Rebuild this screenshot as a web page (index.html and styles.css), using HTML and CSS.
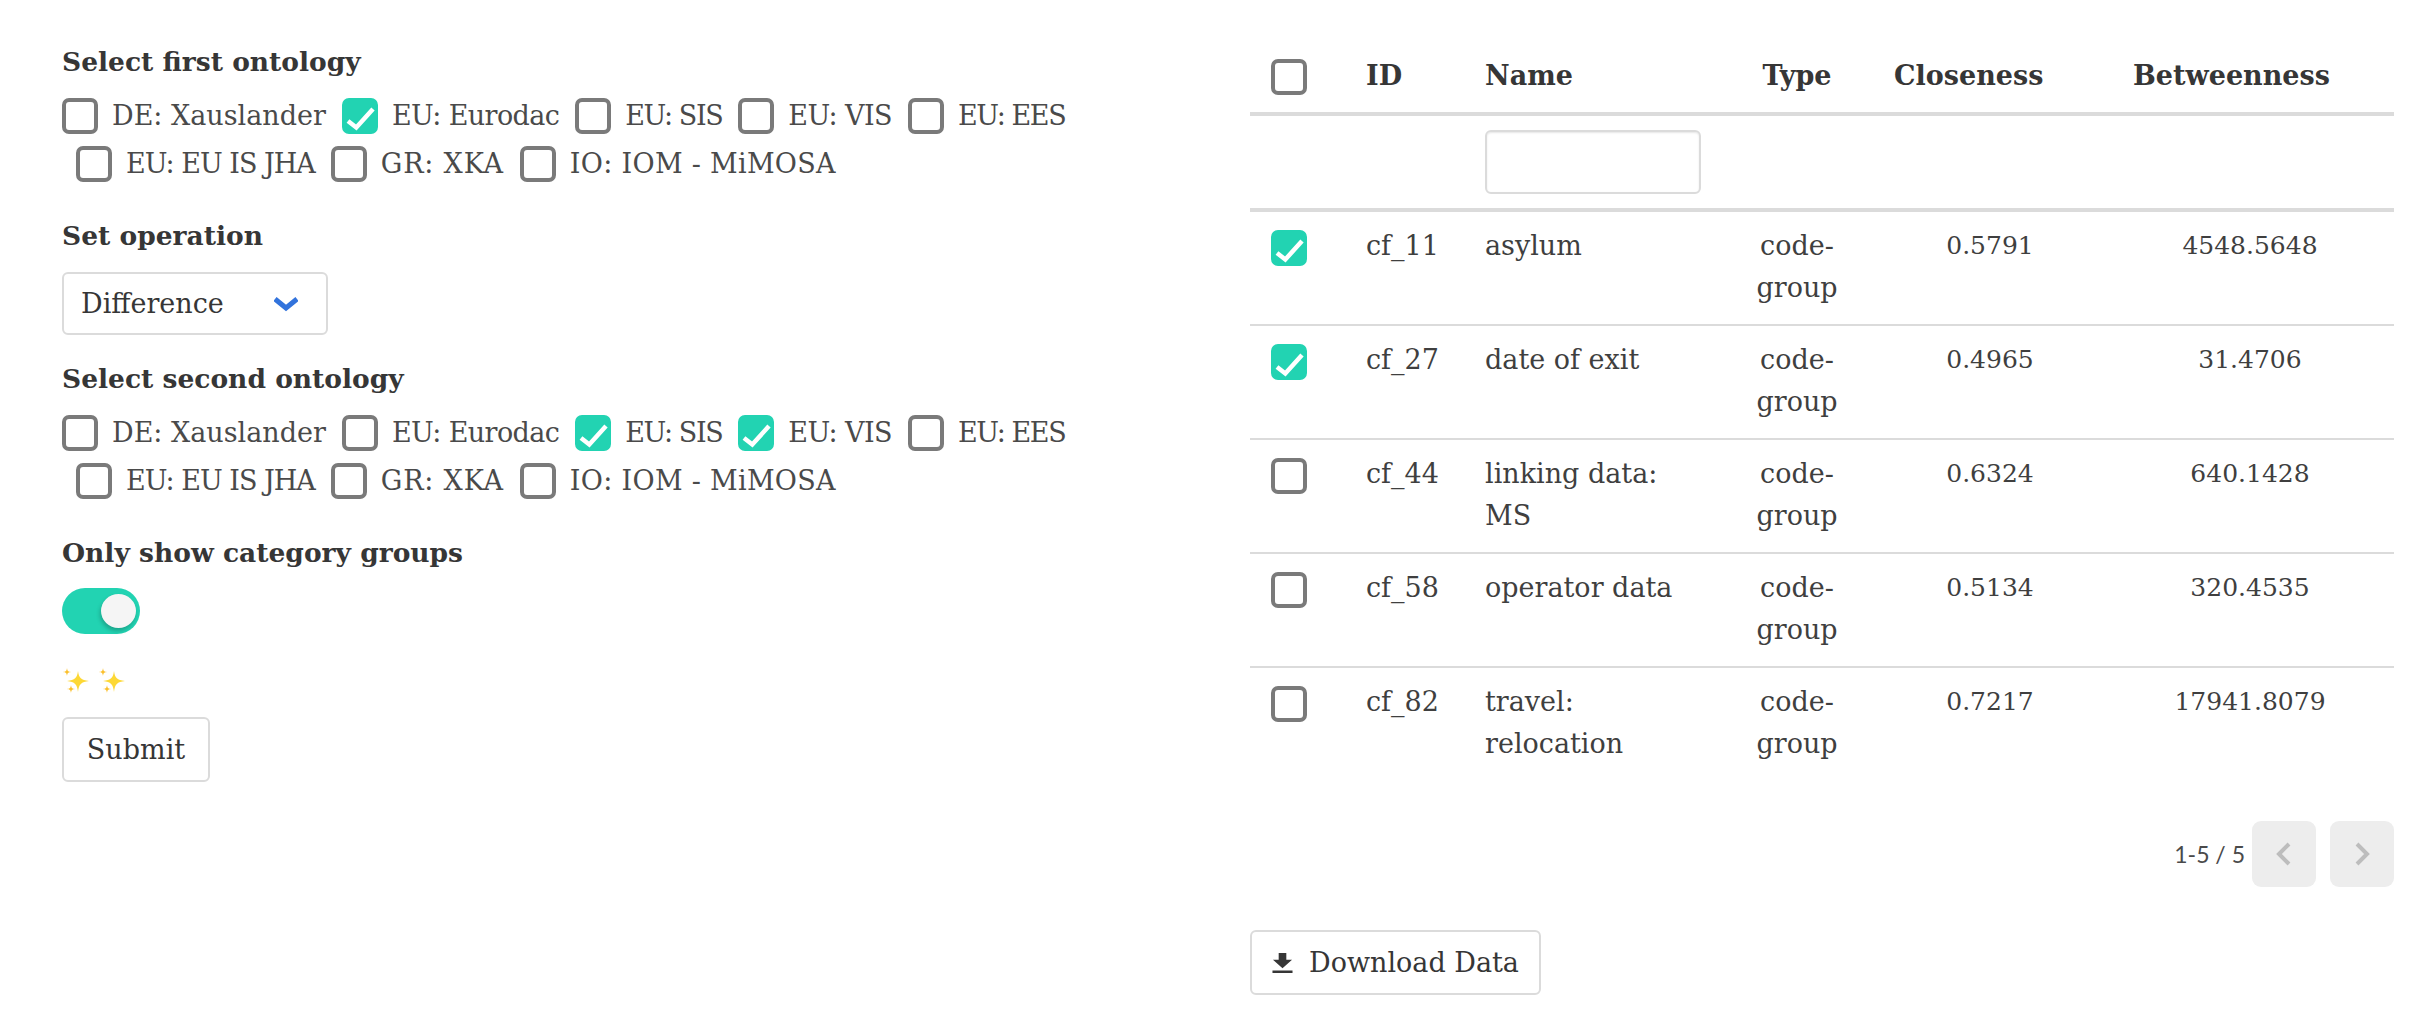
FILE: index.html
```html
<!DOCTYPE html>
<html lang="en">
<head>
<meta charset="utf-8">
<title>Ontology comparison</title>
<link rel="stylesheet" href="styles.css">
</head>
<body>
<svg class="defs" width="0" height="0" aria-hidden="true">
  <symbol id="tick" viewBox="0 0 36 36"><path d="M6 23 L14.300 29.500 L31 11" fill="none" stroke="#fff" stroke-width="4.500"/></symbol>
  <symbol id="sparkle" viewBox="0 0 28 28">
    <path d="M16 4 C17 11 19 13 27 14 C19 15 17 17 16 25 C15 17 13 15 5 14 C13 13 15 11 16 4Z" fill="#fdd835"/>
    <path d="M5 1 C5.400 4 6 4.600 9 5 C6 5.400 5.400 6 5 9 C4.600 6 4 5.400 1 5 C4 4.600 4.600 4 5 1Z" fill="#fbc02d"/>
    <path d="M9 18 C9.400 21 10 21.600 13 22 C10 22.400 9.400 23 9 26 C8.600 23 8 22.400 5 22 C8 21.600 8.600 21 9 18Z" fill="#fbc02d"/>
  </symbol>
</svg>
<main class="page">
  <section class="controls">
    <div class="field">
      <div class="label">Select first ontology</div>
      <div class="check-row">
        <label class="item"><span class="box"></span>DE: Xauslander</label>
        <label class="item tight-sm"><span class="box on"><svg class="tick"><use href="#tick"/></svg></span>EU: Eurodac</label>
        <label class="item tight-lg"><span class="box"></span>EU: SIS</label>
        <label class="item tight-sm"><span class="box"></span>EU: VIS</label>
        <label class="item tight-lg"><span class="box"></span>EU: EES</label>
      </div>
      <div class="check-row indented">
        <label class="item tight-md"><span class="box"></span>EU: EU IS JHA</label>
        <label class="item loose-md"><span class="box"></span>GR: XKA</label>
        <label class="item loose-sm"><span class="box"></span>IO: IOM - MiMOSA</label>
      </div>
    </div>
    <div class="field field-select">
      <div class="label label-tight">Set operation</div>
      <div class="select">
        <span>Difference</span>
        <svg class="select-arrow" viewBox="0 0 24 16"><path d="M1 3 L12 12 L23 3" fill="none" stroke="#3273dc" stroke-width="5"/></svg>
      </div>
    </div>
    <div class="field">
      <div class="label">Select second ontology</div>
      <div class="check-row">
        <label class="item"><span class="box"></span>DE: Xauslander</label>
        <label class="item tight-sm"><span class="box"></span>EU: Eurodac</label>
        <label class="item tight-lg"><span class="box on"><svg class="tick"><use href="#tick"/></svg></span>EU: SIS</label>
        <label class="item tight-sm"><span class="box on"><svg class="tick"><use href="#tick"/></svg></span>EU: VIS</label>
        <label class="item tight-lg"><span class="box"></span>EU: EES</label>
      </div>
      <div class="check-row indented">
        <label class="item tight-md"><span class="box"></span>EU: EU IS JHA</label>
        <label class="item loose-md"><span class="box"></span>GR: XKA</label>
        <label class="item loose-sm"><span class="box"></span>IO: IOM - MiMOSA</label>
      </div>
    </div>
    <div class="label label-toggle">Only show category groups</div>
    <div class="toggle"><span class="knob"></span></div>
    <div class="sparkles">
      <svg class="sparkle"><use href="#sparkle"/></svg>
      <svg class="sparkle"><use href="#sparkle"/></svg>
    </div>
    <button class="btn btn-submit" type="button">Submit</button>
  </section>

  <section class="results">
    <table class="grid">
      <colgroup>
        <col class="c-check"><col class="c-id"><col class="c-name"><col class="c-type"><col class="c-close"><col class="c-between">
      </colgroup>
      <thead>
        <tr class="head-row">
          <th><span class="box"></span></th>
          <th>ID</th>
          <th>Name</th>
          <th class="center">Type</th>
          <th class="th-close">Closeness</th>
          <th class="th-between">Betweenness</th>
        </tr>
        <tr class="filter-row">
          <th></th><th></th>
          <th><input class="filter" type="text" aria-label="Filter name"></th>
          <th></th><th></th><th></th>
        </tr>
      </thead>
      <tbody>
        <tr>
          <td><span class="box on"><svg class="tick"><use href="#tick"/></svg></span></td>
          <td>cf_11</td><td>asylum</td><td class="center">code-group</td><td class="center num">0.5791</td><td class="center num">4548.5648</td>
        </tr>
        <tr>
          <td><span class="box on"><svg class="tick"><use href="#tick"/></svg></span></td>
          <td>cf_27</td><td>date of exit</td><td class="center">code-group</td><td class="center num">0.4965</td><td class="center num">31.4706</td>
        </tr>
        <tr>
          <td><span class="box"></span></td>
          <td>cf_44</td><td>linking data: MS</td><td class="center">code-group</td><td class="center num">0.6324</td><td class="center num">640.1428</td>
        </tr>
        <tr>
          <td><span class="box"></span></td>
          <td>cf_58</td><td>operator data</td><td class="center">code-group</td><td class="center num">0.5134</td><td class="center num">320.4535</td>
        </tr>
        <tr class="last">
          <td><span class="box"></span></td>
          <td>cf_82</td><td>travel: relocation</td><td class="center">code-group</td><td class="center num">0.7217</td><td class="center num">17941.8079</td>
        </tr>
      </tbody>
    </table>
    <div class="pager">
      <span class="pager-text">1-5 / 5</span>
      <span class="pager-btn pager-prev"><svg viewBox="0 0 16 24"><path d="M13 2 L3 12 L13 22" fill="none" stroke="#bdbdbd" stroke-width="4"/></svg></span>
      <span class="pager-btn"><svg viewBox="0 0 16 24"><path d="M3 2 L13 12 L3 22" fill="none" stroke="#bdbdbd" stroke-width="4"/></svg></span>
    </div>
    <button class="btn btn-download" type="button">
      <svg class="dl-icon" viewBox="0 0 22 22"><path d="M7 1 H15 V8 H21 L11 17 L1 8 H7Z M0.500 19.500 H21.500 V22 H0.500Z" fill="#363636"/></svg>
      Download Data
    </button>
  </section>
</main>
</body>
</html>
```
FILE: styles.css
```css
* { box-sizing: border-box; }

html, body { margin: 0; padding: 0; background: #fff; }

body {
  font-family: "DejaVu Serif", "Liberation Serif", serif;
  font-size: 27px;
  line-height: 42px;
  color: #4a4a4a;
  height: 1026px;
  overflow: hidden;
}

.defs { position: absolute; }

.page { display: flex; }

.controls { width: 1250px; padding: 41px 0 0 62px; }

.results { width: 1144px; padding-top: 36px; }

.field { margin-bottom: 27px; }
.field-select { margin-bottom: 23px; }

.label {
  font-weight: 700;
  color: #363636;
  margin-bottom: 9px;
  font-size: 26.5px;
}
.label-tight { margin-bottom: 15px; }
.label-toggle { margin-bottom: 14px; }

.check-row { display: flex; height: 48px; align-items: center; }
.check-row.indented { padding-left: 14px; }

.item { display: flex; align-items: center; margin-right: 16px; white-space: nowrap; }
.tight-lg { letter-spacing: -1.4px; }
.tight-md { letter-spacing: -1px; }
.tight-sm { letter-spacing: -0.6px; }
.loose-md { letter-spacing: 0.8px; }
.loose-sm { letter-spacing: 0.3px; }

.box {
  flex: none;
  display: inline-block;
  width: 36px;
  height: 36px;
  margin-right: 14px;
  border: 4px solid #7a7a7a;
  border-radius: 7px;
  background: #fff;
  position: relative;
  vertical-align: top;
}
.box.on { background: #22d3b2; border-color: #22d3b2; }
.tick { position: absolute; inset: -4px; width: 36px; height: 36px; }

.select {
  width: 266px;
  height: 63px;
  padding: 0 28px 0 17px;
  border: 2px solid #dbdbdb;
  border-radius: 6px;
  display: flex;
  align-items: center;
  justify-content: space-between;
  color: #363636;
}
.select-arrow { width: 24px; height: 16px; }

.toggle {
  width: 78px;
  height: 46px;
  border-radius: 23px;
  background: #22d3b2;
  position: relative;
}
.knob {
  position: absolute;
  top: 6px;
  right: 4px;
  width: 35px;
  height: 34px;
  border-radius: 50%;
  background: #f5f5f5;
  box-shadow: -1px 3px 4px rgba(0, 0, 0, 0.22);
}

.sparkles { display: flex; gap: 8px; align-items: center; height: 42px; margin: 26px 0 15px; }
.sparkle { width: 28px; height: 28px; }

.btn {
  font: inherit;
  color: #363636;
  background: #fff;
  border: 2px solid #dbdbdb;
  border-radius: 6px;
  height: 65px;
  padding: 0;
  display: flex;
  align-items: center;
  justify-content: center;
}
.btn-submit { width: 148px; }
.btn-download { width: 291px; height: 65px; gap: 16px; margin-top: 43px; }
.dl-icon { width: 21px; height: 21px; }

.grid { width: 1144px; table-layout: fixed; border-collapse: separate; border-spacing: 0; }
.c-check { width: 96px; }
.c-id { width: 119px; }
.c-name { width: 255px; }
.c-type { width: 154px; }
.c-close { width: 232px; }
.c-between { width: 288px; }

.grid th, .grid td { padding: 0 20px; text-align: left; vertical-align: top; }
.grid th { font-weight: 700; color: #363636; }
.grid td { color: #3f3f3f; }
.grid .center { text-align: center; }
.grid .num { font-size: 25px; }

.head-row th { padding-top: 19px; padding-bottom: 15px; border-bottom: 4px solid #dbdbdb; }
.head-row .box { margin: 4px 0 0 1px; }
.grid .th-close { padding-left: 20px; padding-right: 0; }
.grid .th-between { padding-left: 27px; padding-right: 0; }

.filter-row th { padding-top: 14px; padding-bottom: 14px; border-bottom: 4px solid #dbdbdb; }
.filter {
  display: block;
  width: 216px;
  height: 64px;
  border: 2px solid #dbdbdb;
  border-radius: 6px;
  background: #fff;
  box-shadow: inset 0 1px 2px rgba(10, 10, 10, 0.1);
}

.grid td { padding-top: 13px; padding-bottom: 15px; border-bottom: 2px solid #dbdbdb; }
.grid td .box { margin: 5px 0 0 1px; }
.grid tr.last td { border-bottom: 0; }

.pager { display: flex; justify-content: flex-end; align-items: center; margin-top: 41px; height: 66px; }
.pager-text { font-family: Lato, sans-serif; font-size: 23px; margin-right: 7px; }
.pager-btn {
  width: 64px;
  height: 66px;
  border-radius: 9px;
  background: #ededed;
  display: flex;
  align-items: center;
  justify-content: center;
}
.pager-prev { margin-right: 14px; }
.pager-btn svg { width: 16px; height: 24px; }
```
